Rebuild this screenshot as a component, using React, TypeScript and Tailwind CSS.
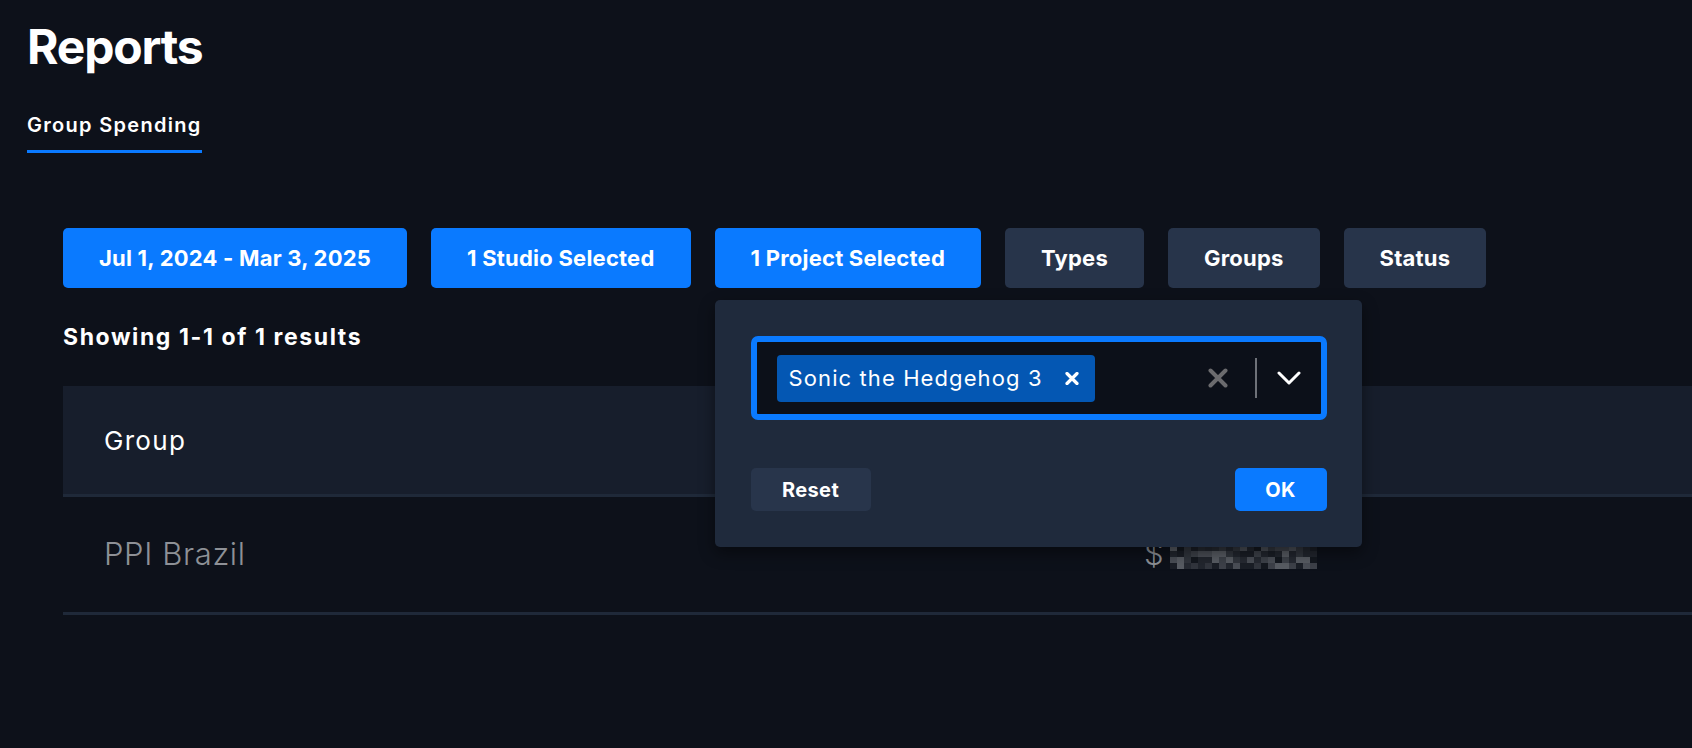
import type { ReactNode } from "react"

const mosaic = (() => {
  // blurred amount placeholder, a small grid of grey cells
  const shades = ["#1a1e26", "#262a32", "#31353d", "#3d4149", "#4a4e56", "#585c63", "#22262e", "#14181f"]
  let seed = 11
  const cells: { x: number; y: number; c: string }[] = []
  for (let r = 0; r < 4; r++) {
    for (let c = 0; c < 21; c++) {
      seed = (seed * 9301 + 49297) % 233280
      const i = Math.floor((seed / 233280) * shades.length)
      cells.push({ x: c * 7, y: r * 6, c: shades[i] })
    }
  }
  return cells
})()

function FilterButton({ children, active }: { children: ReactNode; active?: boolean }) {
  return (
    <button
      className={
        active
          ? "h-[60px] rounded-[5px] bg-[#0a7aff] px-[36px] text-[22px] font-bold tracking-[0.01em] text-white"
          : "h-[60px] rounded-[5px] bg-[#27344a] px-[36px] text-[22px] font-bold tracking-[0.01em] text-white"
      }
    >
      {children}
    </button>
  )
}

function ProjectPopover() {
  return (
    <div className="absolute left-0 top-[72px] z-10 w-[647px] rounded-[5px] bg-[#1f2a3c] py-[36px] pl-[36px] pr-[35px] shadow-[0_6px_16px_rgba(0,0,0,0.45)]">
      <div className="flex h-[84px] items-center rounded-[7px] border-[6px] border-[#0a7aff] bg-[#0c1019] pl-[20px] pr-[20px]">
        <span className="flex h-[47px] items-center rounded-[4px] bg-[#0457b3] pl-[12px] pr-[16px] text-[22px] tracking-[0.05em] text-white">
          Sonic the Hedgehog 3
          <svg className="ml-[22px]" width="14" height="13" viewBox="0 0 14 13">
            <path d="M2 1.5 L12 11.5 M12 1.5 L2 11.5" stroke="white" strokeWidth="3.2" strokeLinecap="round" />
          </svg>
        </span>
        <div className="ml-auto flex items-center">
          <svg width="20" height="20" viewBox="0 0 20 20">
            <path d="M2.5 2.5 L17.5 17.5 M17.5 2.5 L2.5 17.5" stroke="#6b6b6e" strokeWidth="4" strokeLinecap="round" />
          </svg>
          <div className="ml-[27px] h-[40px] w-[2px] bg-[#6e7178]" />
          <svg className="ml-[20px]" width="24" height="14" viewBox="0 0 24 14">
            <path d="M2 2 L12 12 L22 2" stroke="white" strokeWidth="3" fill="none" strokeLinecap="round" strokeLinejoin="round" />
          </svg>
        </div>
      </div>
      <div className="mt-[48px] flex items-center justify-between">
        <button className="h-[43px] w-[120px] rounded-[5px] bg-[#28354b] text-[20px] font-bold tracking-[0.02em] text-white">
          Reset
        </button>
        <button className="h-[43px] w-[92px] rounded-[5px] bg-[#0a7aff] text-[20px] font-bold tracking-[0.02em] text-white">
          OK
        </button>
      </div>
    </div>
  )
}

export default function App() {
  return (
    <div className="min-h-screen w-full overflow-hidden bg-[#0d111a] font-['Inter','Noto_Sans',sans-serif] text-white">
      <div className="px-[27px] pt-[23px]">
        <h1 className="text-[48px] font-bold leading-none tracking-[-0.025em]">Reports</h1>
        <div className="mt-[44px] flex">
          <div className="border-b-[3px] border-[#0a7aff] pb-[15px] text-[20px] font-semibold leading-none tracking-[0.065em]">
            Group Spending
          </div>
        </div>
      </div>

      <div className="pl-[63px] pt-[75px]">
        <div className="flex gap-[24px]">
          <FilterButton active>Jul 1, 2024 - Mar 3, 2025</FilterButton>
          <FilterButton active>1 Studio Selected</FilterButton>
          <div className="relative">
            <FilterButton active>1 Project Selected</FilterButton>
            <ProjectPopover />
          </div>
          <FilterButton>Types</FilterButton>
          <FilterButton>Groups</FilterButton>
          <FilterButton>Status</FilterButton>
        </div>

        <p className="mt-[38px] text-[23px] font-bold leading-none tracking-[1.6px]">Showing 1-1 of 1 results</p>

        <div className="mt-[37px]">
          <div className="flex h-[111px] items-center border-b-[3px] border-[#1f2939] bg-[#171e2c]">
            <div className="w-[1041px] pl-[41px] text-[26px] tracking-[0.05em]">Group</div>
          </div>
          <div className="flex h-[118px] items-center border-b-[3px] border-[#1f2939]">
            <div className="w-[1041px] pl-[41px] text-[31px] font-light tracking-[0.02em] text-[#8e9197]">PPI Brazil</div>
            <div className="flex items-center pl-[40px] text-[31px] font-light text-[#8e9197]">
              $
              <svg className="ml-[6px] mt-[4px]" width="147" height="24" viewBox="0 0 147 24">
                {mosaic.map((m, i) => (
                  <rect key={i} x={m.x} y={m.y} width="7" height="6" fill={m.c} />
                ))}
              </svg>
            </div>
          </div>
        </div>
      </div>
    </div>
  )
}
